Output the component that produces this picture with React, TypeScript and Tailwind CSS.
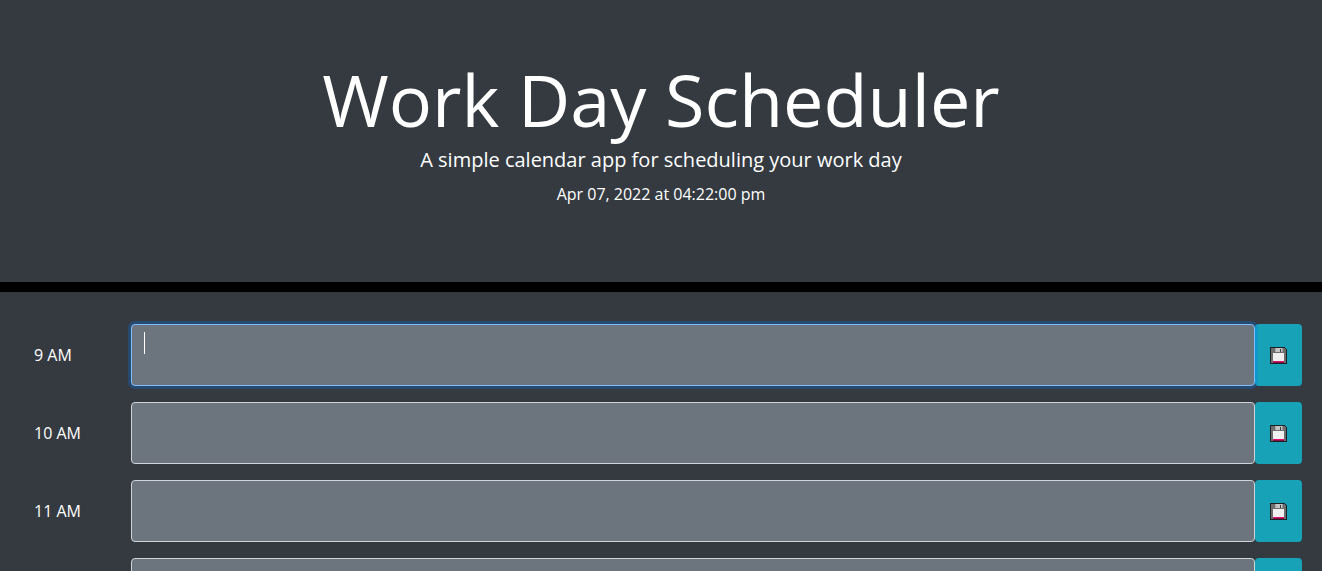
const hours = ['9 AM', '10 AM', '11 AM', '12 PM', '1 PM', '2 PM', '3 PM', '4 PM', '5 PM'];

function FloppyIcon() {
  return (
    <svg width="17" height="17" viewBox="0 0 17 17" aria-hidden="true" shapeRendering="crispEdges">
      <path d="M0 0H15V1H16V2H17V17H0Z" fill="#1c2022" />
      <path d="M1 1H15V2H16V16H1Z" fill="#6e6e6e" />
      <path d="M5 1H12V5H5Z" fill="#c4c4c4" />
      <path d="M5 1H6V5H5Z" fill="#a8a8a8" />
      <path d="M10 2H11V5H10Z" fill="#3c3c3c" />
      <path d="M12 1H13V5H12Z" fill="#9c9c9c" />
      <path d="M3 6H14V14H3Z" fill="#f0f0f0" />
      <path d="M3 14H14V15H3Z" fill="#e0106c" />
      <path d="M3 15H14V16H3Z" fill="#8c1048" />
    </svg>
  );
}

function TimeBlock({ hour, active }: { hour: string; active: boolean }) {
  const id = `task-${hour.replace(' ', '-').toLowerCase()}`;
  return (
    <div className="flex">
      <label htmlFor={id} className="flex w-[111px] shrink-0 items-center pl-3.5">
        {hour}
      </label>
      <div className="relative flex min-w-0 flex-1">
        <textarea
          id={id}
          rows={2}
          autoFocus={active}
          className="peer relative block h-[62px] w-full resize-none rounded border border-[#ced4da] bg-[#6c757d] px-3 py-1.5 text-white caret-transparent outline-none focus:z-10 focus:border-[#80bdff] focus:shadow-[0_0_0_3px_rgba(0,123,255,0.25)]"
        />
        {active && (
          <span className="pointer-events-none absolute left-[13px] top-2 z-20 hidden h-[22px] w-px bg-white peer-focus:block" />
        )}
      </div>
      <button
        type="button"
        aria-label={`Save ${hour}`}
        className="flex w-[47px] shrink-0 cursor-pointer items-center justify-center rounded bg-[#17a2b8] hover:bg-[#138496]"
      >
        <FloppyIcon />
      </button>
    </div>
  );
}

export default function App() {
  return (
    <div className="min-h-screen overflow-x-hidden bg-[#343a40] font-['Open_Sans','Noto_Sans',sans-serif] text-base text-white">
      <header className="mb-8 border-b-10 border-black px-8 pb-19 pt-16 text-center">
        <h1 className="mb-2 text-7xl leading-[70px]">Work Day Scheduler</h1>
        <p className="mb-1 text-xl leading-9">A simple calendar app for scheduling your work day</p>
        <p>Apr 07, 2022 at 04:22:00 pm</p>
      </header>
      <main className="flex flex-col gap-4 px-5 pb-4">
        {hours.map((hour, index) => (
          <TimeBlock key={hour} hour={hour} active={index === 0} />
        ))}
      </main>
    </div>
  );
}
